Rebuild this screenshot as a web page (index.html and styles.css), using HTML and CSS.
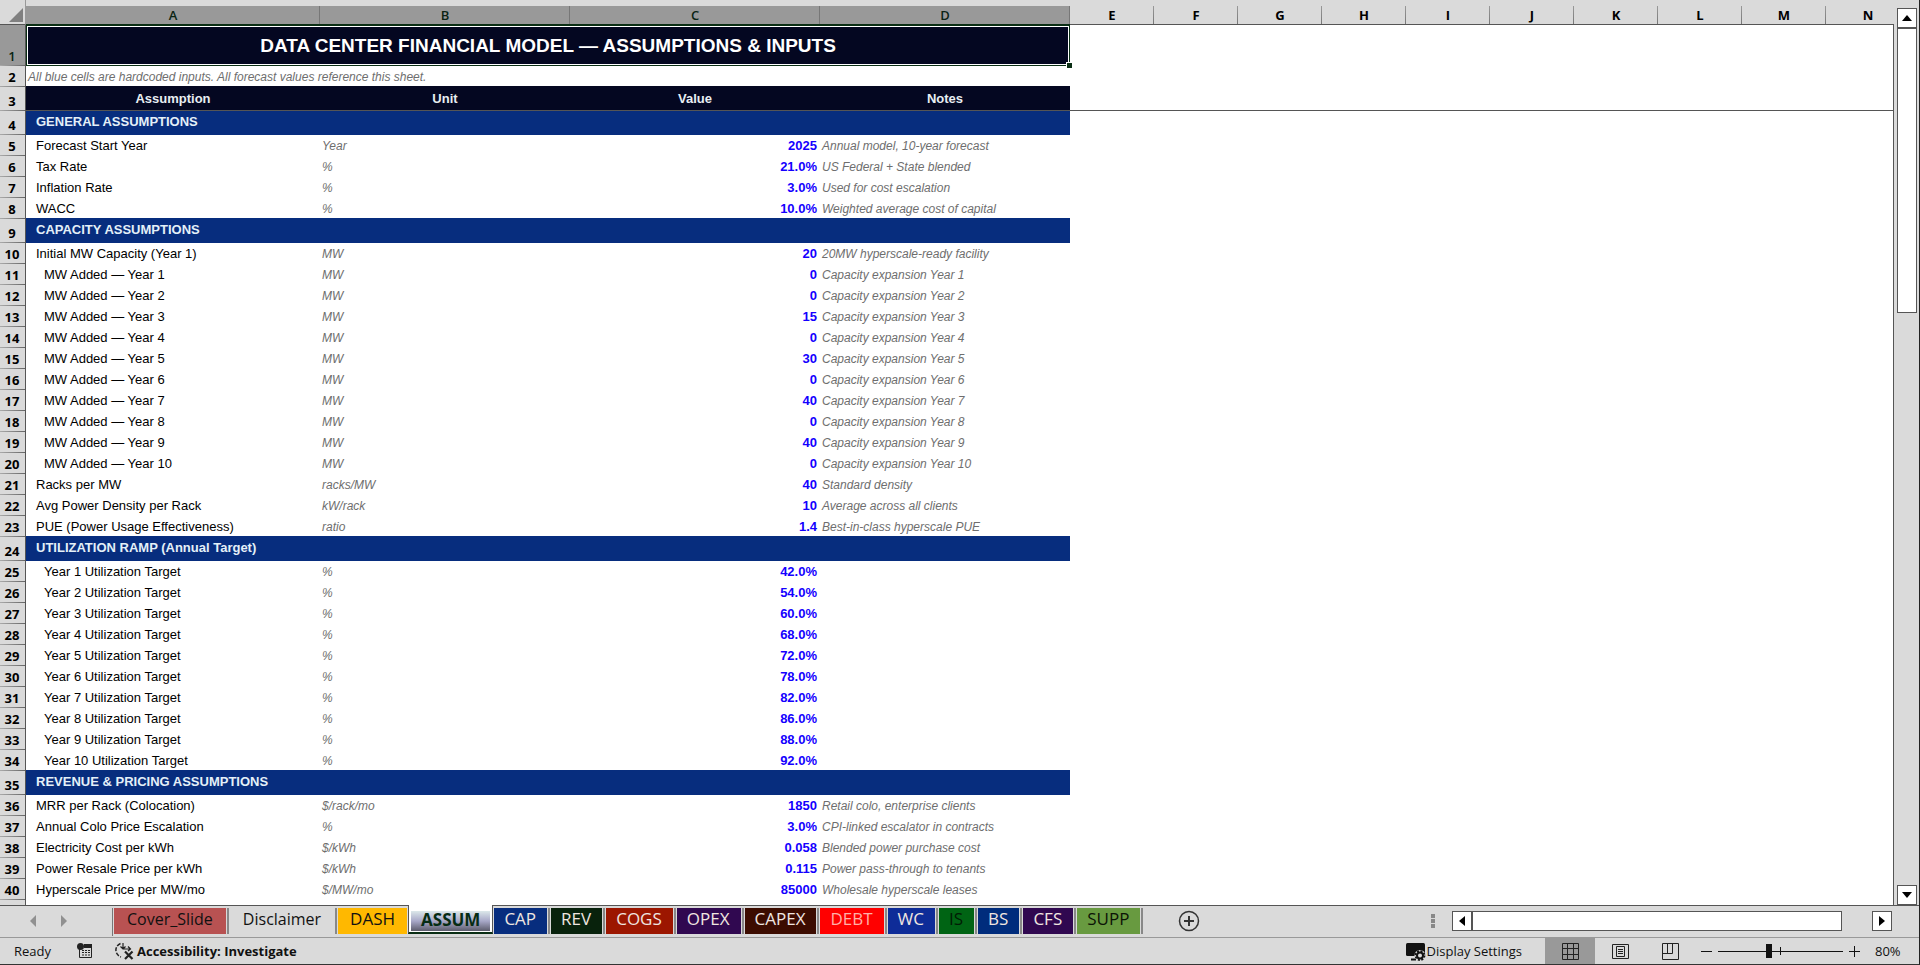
FILE: index.html
```html
<!DOCTYPE html>
<html lang="en">
<head>
    <meta charset="utf-8">
    <title>Data Center Financial Model</title>
    <link rel="stylesheet" href="styles.css">
</head>
<body>
    <div class="app">
        <main class="workspace">
            <div class="sheet">
                <table class="grid">
                    <colgroup>
                        <col class="col-head"><col class="col-a"><col class="col-wide"><col class="col-wide"><col class="col-wide">
                        <col class="col-std" span="10">
                    </colgroup>
                    <thead>
                        <tr>
                            <th class="corner"><svg width="14" height="14" viewBox="0 0 14 14"><path d="M14 0v14H0z" fill="#808080"/></svg></th>
                            <th class="sel">A</th><th class="sel">B</th><th class="sel">C</th><th class="sel">D</th>
                            <th>E</th><th>F</th><th>G</th><th>H</th><th>I</th><th>J</th><th>K</th><th>L</th><th>M</th><th>N</th>
                        </tr>
                    </thead>
                    <tbody>
                        <tr class="title"><th class="sel">1</th><td colspan="4">DATA CENTER FINANCIAL MODEL — ASSUMPTIONS &amp; INPUTS<span class="fill-handle"></span></td><td colspan="10"></td></tr>
                        <tr class="subtitle"><th>2</th><td colspan="4">All blue cells are hardcoded inputs. All forecast values reference this sheet.</td><td colspan="10"></td></tr>
                        <tr class="heading"><th>3</th><td>Assumption</td><td>Unit</td><td>Value</td><td>Notes</td><td class="blank" colspan="10"></td></tr>

                        <tr class="section"><th>4</th><td colspan="4">GENERAL ASSUMPTIONS</td></tr>
                        <tr><th>5</th><td>Forecast Start Year</td><td>Year</td><td>2025</td><td>Annual model, 10-year forecast</td></tr>
                        <tr><th>6</th><td>Tax Rate</td><td>%</td><td>21.0%</td><td>US Federal + State blended</td></tr>
                        <tr><th>7</th><td>Inflation Rate</td><td>%</td><td>3.0%</td><td>Used for cost escalation</td></tr>
                        <tr><th>8</th><td>WACC</td><td>%</td><td>10.0%</td><td>Weighted average cost of capital</td></tr>

                        <tr class="section"><th>9</th><td colspan="4">CAPACITY ASSUMPTIONS</td></tr>
                        <tr><th>10</th><td>Initial MW Capacity (Year 1)</td><td>MW</td><td>20</td><td>20MW hyperscale-ready facility</td></tr>
                        <tr class="sub"><th>11</th><td>MW Added — Year 1</td><td>MW</td><td>0</td><td>Capacity expansion Year 1</td></tr>
                        <tr class="sub"><th>12</th><td>MW Added — Year 2</td><td>MW</td><td>0</td><td>Capacity expansion Year 2</td></tr>
                        <tr class="sub"><th>13</th><td>MW Added — Year 3</td><td>MW</td><td>15</td><td>Capacity expansion Year 3</td></tr>
                        <tr class="sub"><th>14</th><td>MW Added — Year 4</td><td>MW</td><td>0</td><td>Capacity expansion Year 4</td></tr>
                        <tr class="sub"><th>15</th><td>MW Added — Year 5</td><td>MW</td><td>30</td><td>Capacity expansion Year 5</td></tr>
                        <tr class="sub"><th>16</th><td>MW Added — Year 6</td><td>MW</td><td>0</td><td>Capacity expansion Year 6</td></tr>
                        <tr class="sub"><th>17</th><td>MW Added — Year 7</td><td>MW</td><td>40</td><td>Capacity expansion Year 7</td></tr>
                        <tr class="sub"><th>18</th><td>MW Added — Year 8</td><td>MW</td><td>0</td><td>Capacity expansion Year 8</td></tr>
                        <tr class="sub"><th>19</th><td>MW Added — Year 9</td><td>MW</td><td>40</td><td>Capacity expansion Year 9</td></tr>
                        <tr class="sub"><th>20</th><td>MW Added — Year 10</td><td>MW</td><td>0</td><td>Capacity expansion Year 10</td></tr>
                        <tr><th>21</th><td>Racks per MW</td><td>racks/MW</td><td>40</td><td>Standard density</td></tr>
                        <tr><th>22</th><td>Avg Power Density per Rack</td><td>kW/rack</td><td>10</td><td>Average across all clients</td></tr>
                        <tr><th>23</th><td>PUE (Power Usage Effectiveness)</td><td>ratio</td><td>1.4</td><td>Best-in-class hyperscale PUE</td></tr>

                        <tr class="section"><th>24</th><td colspan="4">UTILIZATION RAMP (Annual Target)</td></tr>
                        <tr class="sub"><th>25</th><td>Year 1 Utilization Target</td><td>%</td><td>42.0%</td><td></td></tr>
                        <tr class="sub"><th>26</th><td>Year 2 Utilization Target</td><td>%</td><td>54.0%</td><td></td></tr>
                        <tr class="sub"><th>27</th><td>Year 3 Utilization Target</td><td>%</td><td>60.0%</td><td></td></tr>
                        <tr class="sub"><th>28</th><td>Year 4 Utilization Target</td><td>%</td><td>68.0%</td><td></td></tr>
                        <tr class="sub"><th>29</th><td>Year 5 Utilization Target</td><td>%</td><td>72.0%</td><td></td></tr>
                        <tr class="sub"><th>30</th><td>Year 6 Utilization Target</td><td>%</td><td>78.0%</td><td></td></tr>
                        <tr class="sub"><th>31</th><td>Year 7 Utilization Target</td><td>%</td><td>82.0%</td><td></td></tr>
                        <tr class="sub"><th>32</th><td>Year 8 Utilization Target</td><td>%</td><td>86.0%</td><td></td></tr>
                        <tr class="sub"><th>33</th><td>Year 9 Utilization Target</td><td>%</td><td>88.0%</td><td></td></tr>
                        <tr class="sub"><th>34</th><td>Year 10 Utilization Target</td><td>%</td><td>92.0%</td><td></td></tr>

                        <tr class="section"><th>35</th><td colspan="4">REVENUE &amp; PRICING ASSUMPTIONS</td></tr>
                        <tr><th>36</th><td>MRR per Rack (Colocation)</td><td>$/rack/mo</td><td>1850</td><td>Retail colo, enterprise clients</td></tr>
                        <tr><th>37</th><td>Annual Colo Price Escalation</td><td>%</td><td>3.0%</td><td>CPI-linked escalator in contracts</td></tr>
                        <tr><th>38</th><td>Electricity Cost per kWh</td><td>$/kWh</td><td>0.058</td><td>Blended power purchase cost</td></tr>
                        <tr><th>39</th><td>Power Resale Price per kWh</td><td>$/kWh</td><td>0.115</td><td>Power pass-through to tenants</td></tr>
                        <tr><th>40</th><td>Hyperscale Price per MW/mo</td><td>$/MW/mo</td><td>85000</td><td>Wholesale hyperscale leases</td></tr>
                        <tr class="last"><th></th><td>Hyperscale Annual Escalation</td><td></td><td>2.0%</td><td></td></tr>
                    </tbody>
                </table>
            </div>
            <div class="vscroll">
                <button class="scroll-btn" aria-label="Scroll up"><svg width="10" height="6" viewBox="0 0 10 6"><path d="M5 0l5 6H0z"/></svg></button>
                <div class="vthumb"></div>
                <button class="scroll-btn down" aria-label="Scroll down"><svg width="10" height="6" viewBox="0 0 10 6"><path d="M0 0h10L5 6z"/></svg></button>
            </div>
        </main>

        <div class="tabbar">
            <div class="tab-nav">
                <button aria-label="Previous sheet"><svg width="6" height="12" viewBox="0 0 6 12"><path d="M6 0v12L0 6z"/></svg></button>
                <button aria-label="Next sheet"><svg width="6" height="12" viewBox="0 0 6 12"><path d="M0 0v12l6-6z"/></svg></button>
            </div>
            <nav class="tabs">
                <button class="tab wide cover">Cover_Slide</button>
                <button class="tab wide plain">Disclaimer</button>
                <button class="tab dash">DASH</button>
                <button class="tab active"><span>ASSUM</span></button>
                <button class="tab cap">CAP</button>
                <button class="tab rev">REV</button>
                <button class="tab cogs">COGS</button>
                <button class="tab opex">OPEX</button>
                <button class="tab capex">CAPEX</button>
                <button class="tab debt">DEBT</button>
                <button class="tab wc">WC</button>
                <button class="tab is">IS</button>
                <button class="tab bs">BS</button>
                <button class="tab cfs">CFS</button>
                <button class="tab supp">SUPP</button>
            </nav>
            <button class="add-sheet" aria-label="New sheet"><svg width="22" height="22" viewBox="0 0 22 22" fill="none" stroke="#333"><circle cx="11" cy="11" r="9.5" stroke-width="1.5"/><path d="M11 6v10M6 11h10" stroke-width="2"/></svg></button>
            <div class="hscroll">
                <span class="grip"></span>
                <button class="scroll-btn" aria-label="Scroll left"><svg width="6" height="10" viewBox="0 0 6 10"><path d="M6 0v10L0 5z"/></svg></button>
                <div class="hthumb"></div>
                <button class="scroll-btn right" aria-label="Scroll right"><svg width="6" height="10" viewBox="0 0 6 10"><path d="M0 0v10l6-5z"/></svg></button>
            </div>
        </div>

        <footer class="status">
            <span class="ready">Ready</span>
            <button class="macro" aria-label="Record macro"><svg width="16" height="16" viewBox="0 0 16 16"><path d="M2.500 5v9.500h12V2" fill="none" stroke="#222"/><path d="M7 1h8v4H7z" fill="#222"/><circle cx="3.500" cy="3.500" r="3.500" fill="#222"/><path d="M5 7.500h2m1 0h2m1 0h2M5 9.500h2m1 0h2m1 0h2M5 12h2m1 0h2m1 0h2" stroke="#222"/></svg></button>
            <button class="access"><svg width="20" height="18" viewBox="0 0 20 18" fill="none" stroke="#222"><path d="M5.500 1.500C2 3 .5 6 1 9c.4 3 2.500 5 5 6" stroke-width="1.500" stroke-dasharray="4 1.500"/><path d="M8 1v6m-2.500-2.500L8 7l2.500-2.500M8 7h7M13 4.500l2.500 2.500-2.500 2" stroke-width="1.200"/><path d="M10 9.500l7.500 7.500m0-7.500L10 17" stroke-width="2.200"/></svg>Accessibility: Investigate</button>
            <button class="display"><svg width="20" height="19" viewBox="0 0 20 19"><rect x="0" y="1" width="19" height="13" rx="1.500" fill="#111"/><path d="M5 17.500h5" stroke="#111" stroke-width="2"/><circle cx="14" cy="13.500" r="5.500" fill="#dadada"/><circle cx="14" cy="13.500" r="3" fill="none" stroke="#111" stroke-width="2"/><circle cx="14" cy="13.500" r="4.500" fill="none" stroke="#111" stroke-width="1.800" stroke-dasharray="2 1.530"/></svg>Display Settings</button>
            <div class="views">
                <button class="on" aria-label="Normal view"><svg width="17" height="17" viewBox="0 0 17 17" fill="none" stroke="#222"><path d="M.5.5h16v16H.5zM5.500.5v16M11.500.5v16M.5 5.500h16M.5 11.500h16"/></svg></button>
                <button aria-label="Page layout"><svg width="17" height="17" viewBox="0 0 17 17" fill="none" stroke="#222"><path d="M.5 1.500h16v14H.5zM4.500 3.500h8v10h-8zM6 6.500h5M6 8.500h5M6 10.500h5"/></svg></button>
                <button aria-label="Page break preview"><svg width="17" height="17" viewBox="0 0 17 17" fill="none" stroke="#222"><path d="M.5.5h16v16H.5zM.5 10.500h10V.5M5.500.5v10"/></svg></button>
            </div>
            <div class="zoom">
                <button aria-label="Zoom out"><svg width="11" height="11" viewBox="0 0 11 11"><path d="M0 5.500h11" stroke="#111"/></svg></button>
                <div class="slider"><input type="range" min="10" max="184" value="80" aria-label="Zoom"></div>
                <button aria-label="Zoom in"><svg width="11" height="11" viewBox="0 0 11 11"><path d="M0 5.500h11M5.500 0v11" stroke="#111"/></svg></button>
                <span class="zoom-value">80%</span>
            </div>
        </footer>
    </div>
</body>
</html>
```

FILE: styles.css
```css
body {
    margin: 0;
    background: #dadada;
    font-family: "Open Sans", "Noto Sans", sans-serif;
    color: #111;
}
button {
    border: 0;
    margin: 0;
    padding: 0;
    background: none;
    font: inherit;
    color: inherit;
    cursor: pointer;
}
svg {
    display: block;
}
.app {
    display: flex;
    flex-direction: column;
    height: 100vh;
    box-sizing: border-box;
    border-right: 1px solid #222;
    border-bottom: 1px solid #333;
    overflow: hidden;
}

/* grid */
.workspace {
    display: flex;
    flex: 1;
    min-height: 0;
}
.sheet {
    position: relative;
    flex: 1;
    min-width: 0;
    overflow: hidden;
    background: linear-gradient(#dadada 25px, #fff 25px);
}
.sheet::after {
    content: "";
    position: absolute;
    top: 25px;
    right: 0;
    bottom: 0;
    width: 1px;
    background: #555;
}
.grid {
    width: 1910px;
    table-layout: fixed;
    border-collapse: separate;
    border-spacing: 0;
    font: 13px/20px "Liberation Sans", Arial, sans-serif;
    color: #000;
}
.col-head { width: 26px; }
.col-a { width: 294px; }
.col-wide { width: 250px; }
.col-std { width: 84px; }

.grid th,
.grid td {
    height: 21px;
    padding: 0 2px;
    box-sizing: border-box;
    white-space: nowrap;
    text-align: left;
}
.grid th {
    font-family: "Open Sans", "Noto Sans", sans-serif;
    font-weight: 700;
    text-align: center;
}
.grid thead th {
    height: 25px;
    padding-top: 7px;
    line-height: 17px;
    border-bottom: 1px solid #555;
    background: linear-gradient(#999, #777) right bottom / 1px 18px no-repeat #dadada;
}
.grid thead .corner {
    padding: 8px 2px 2px 9px;
    background: #dadada;
    border-right: 1px solid #999;
}
.grid thead .sel {
    background: linear-gradient(#777, #777) right bottom / 1px 18px no-repeat, linear-gradient(#dadada 6px, #999 6px);
    color: #0a2414;
    font-weight: 600;
}
.grid tbody th {
    padding: 0 1px 1px 0;
    vertical-align: bottom;
    line-height: 17px;
    border-right: 1px solid #555;
    background: linear-gradient(to right, #aaa, #666) left bottom / 100% 1px no-repeat #dadada;
}
.grid tbody th.sel {
    background-color: #999;
    color: #0a2414;
    font-weight: 600;
}
.grid td:nth-child(2) {
    padding-left: 10px;
}
.grid .sub td:nth-child(2) {
    padding-left: 18px;
}
.grid td:nth-child(3),
.grid td:nth-child(5) {
    font-size: 12px;
    font-style: italic;
    color: #6e6e6e;
}
.grid td:nth-child(4) {
    padding-right: 3px;
    text-align: right;
    font-weight: bold;
    color: #1400ff;
}

.grid .title td {
    height: 41px;
}
.grid .title td:nth-child(2) {
    position: relative;
    padding: 0 2px;
    text-align: center;
    font-size: 19px;
    font-weight: bold;
    color: #fff;
    background: #040721;
    box-shadow: inset 0 0 0 1px #0a2e14, inset 0 0 0 2px #fff, 0 -1px 0 #0a2e14;
}
.fill-handle {
    position: absolute;
    right: -2px;
    bottom: -2px;
    width: 5px;
    height: 5px;
    background: #0a2e14;
    border: 1px solid #fff;
    border-width: 1px 0 0 1px;
}
.grid .subtitle td {
    height: 20px;
}
.grid .subtitle td:nth-child(2) {
    padding-left: 2px;
    font-size: 12px;
    font-style: italic;
    color: #6e6e6e;
}
.grid .heading td {
    height: 24px;
    padding: 0 2px;
    text-align: center;
    font-size: 13px;
    font-style: normal;
    font-weight: bold;
    color: #e8eef2;
    background: #040721;
    border-bottom: 1px solid #555;
    box-shadow: 0 -1px 0 #040721;
}
.grid .heading .blank {
    background: none;
    box-shadow: none;
}
.grid .section td {
    height: 24px;
    padding-bottom: 2px;
    font-weight: bold;
    color: #e4f0f8;
    background: #072d7e;
    box-shadow: 0 -1px 0 #072d7e;
}
.grid .heading + .section td {
    box-shadow: none;
}

/* scroll bars */
.scroll-btn {
    display: flex;
    align-items: center;
    justify-content: center;
    width: 20px;
    height: 20px;
    box-sizing: border-box;
    background: #fff;
    border: 1px solid #555;
}
.vscroll {
    display: flex;
    flex-direction: column;
    width: 22px;
    padding: 8px 0 0 3px;
}
.vthumb {
    width: 20px;
    flex: 0 0 285px;
    box-sizing: border-box;
    background: #fff;
    border: 1px solid #555;
}
.vscroll .down {
    margin-top: auto;
}
.hscroll {
    display: flex;
    align-items: center;
    margin-left: auto;
    padding-right: 27px;
}
.grip {
    width: 4px;
    height: 14px;
    margin-right: 17px;
    background: repeating-linear-gradient(#888 0 4px, transparent 4px 5px);
}
.hthumb {
    width: 370px;
    height: 20px;
    box-sizing: border-box;
    background: #fff;
    border: 1px solid #555;
}
.hscroll .right {
    margin-left: 30px;
}

/* sheet tabs */
.tabbar {
    display: flex;
    height: 33px;
    box-sizing: border-box;
    box-shadow: inset 0 1px 0 #555;
    border-bottom: 1px solid #999;
}
.tab-nav {
    display: flex;
    align-items: center;
    gap: 25px;
    width: 112px;
    padding-left: 30px;
    box-sizing: border-box;
    fill: #909090;
}
.tabs {
    display: flex;
    padding-left: 1px;
    border-left: 1px solid #888;
    border-image: linear-gradient(transparent 4px, #777 4px 30px, transparent 30px) 1;
    font-size: 17px;
}
.tab {
    display: flex;
    justify-content: center;
    position: relative;
    height: 26px;
    margin: 3px 4px 0 0;
    padding: 0 11px 0 10px;
    line-height: 22px;
    color: #f0e6e0;
}
.tab::after {
    content: "";
    position: absolute;
    top: 0;
    right: -3px;
    width: 2px;
    height: 26px;
    background: #888;
}
.tab.wide {
    padding: 0 13px;
    font-size: 16px;
    color: #111;
}
.cover { background: #b85252; }
.dash { background: #ffb800; }
.cap { background: #072d7e; }
.rev { background: #08220c; }
.cogs { background: #9c1600; }
.opex { background: #300850; }
.capex { background: #3c0c00; }
.debt { background: #f00; color: #ffb0a8; }
.wc { background: #0e2c98; }
.is { background: #006414; color: #001c04; }
.bs { background: #002c7c; }
.cfs { background: #300850; }
.supp { background: #689a40; color: #0c1406; }
.tab.dash {
    padding: 0 12px;
    color: #111;
}
.tab.dash,
.tab.active {
    margin-right: 1px;
}
.tab.dash::after,
.tab.active::after {
    display: none;
}
.tab.active {
    height: 29px;
    margin-top: 0;
    padding: 6px 2px 0;
    box-sizing: border-box;
    background: #fff;
    border-bottom: 2px solid #0a2e14;
    border-left: 1px solid #555;
    border-right: 1px solid #555;
    font-weight: 700;
    color: #062c14;
}
.tab.active span {
    display: block;
    height: 20px;
    padding: 0 10px;
    line-height: 17px;
    background: linear-gradient(#dce8ea, #a8a8c8 50%, #5c5c6c);
}
.add-sheet {
    margin-left: 34px;
}

/* status bar */
.status {
    display: flex;
    align-items: center;
    height: 26px;
    font-size: 13px;
}
.ready {
    margin: 0 26px 0 14px;
}
.macro {
    margin-right: 22px;
}
.access,
.display {
    display: flex;
    align-items: center;
}
.access {
    gap: 2px;
    font-weight: 700;
}
.display {
    gap: 1px;
    margin-left: auto;
    margin-right: 23px;
}
.views {
    display: flex;
    align-self: stretch;
}
.views button {
    display: flex;
    align-items: center;
    justify-content: center;
    width: 50px;
}
.views .on {
    background: #999;
}
.zoom {
    display: flex;
    align-items: center;
    margin-left: 6px;
    padding-right: 18px;
}
.slider {
    position: relative;
    width: 125px;
    margin: 0 6px;
}
.slider::after {
    content: "";
    position: absolute;
    left: 62px;
    top: 3px;
    width: 1px;
    height: 8px;
    background: #111;
}
.slider input {
    display: block;
    width: 100%;
    height: 14px;
    margin: 0;
    -webkit-appearance: none;
    appearance: none;
    background: linear-gradient(#111, #111) center / 100% 1px no-repeat;
}
.slider input::-webkit-slider-thumb {
    -webkit-appearance: none;
    width: 6px;
    height: 14px;
    background: #111;
}
.zoom-value {
    width: 26px;
    margin-left: 15px;
}
```
